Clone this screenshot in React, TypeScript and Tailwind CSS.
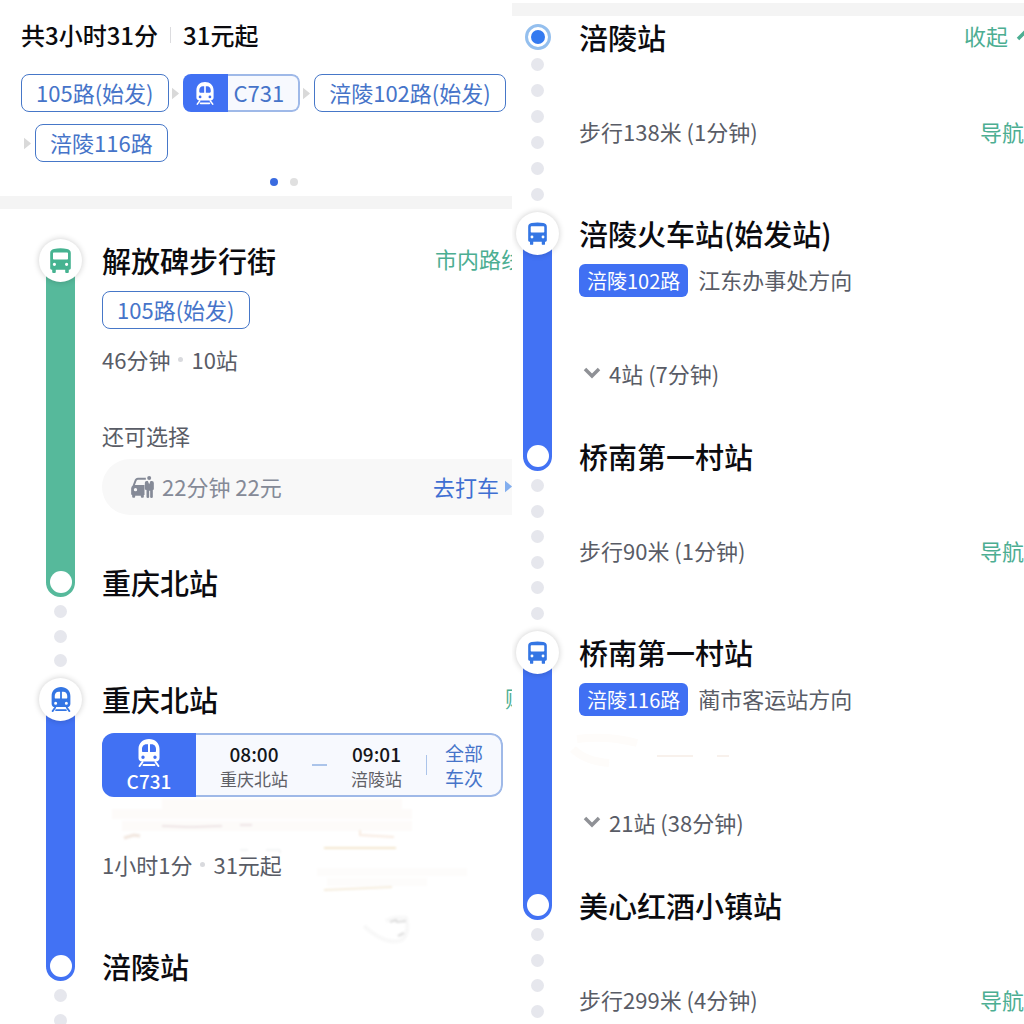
import React from "react";
import clsx from "clsx";

type IconProps = { className?: string };
type Tone = "green" | "blue";

const BusIcon = ({ className }: IconProps) => (
  <svg viewBox="0 0 21 25" className={className} fill="currentColor" aria-hidden="true">
    <path
      fillRule="evenodd"
      d="M4 .9C8 0 13 0 17 .9 19.500 1.400 20.800 2.800 20.800 5v15c0 1-.6 1.700-1.600 1.700h-.4V24a1 1 0 0 1-1 1h-1.600a1 1 0 0 1-1-1v-2.300H5.800V24a1 1 0 0 1-1 1H3.200a1 1 0 0 1-1-1v-2.300h-.4C.8 21.700.2 21 .2 20V5C.2 2.800 1.500 1.400 4 .9ZM3.800 4.500a.8.8 0 0 0-.8.8v5.400c0 .5.300.8.8.8h13.400a.8.8 0 0 0 .8-.8V5.300a.8.8 0 0 0-.8-.8H3.800ZM4.400 14.700a1.600 1.600 0 1 0 0 3.200 1.600 1.600 0 0 0 0-3.200Zm12.200 0a1.600 1.600 0 1 0 0 3.200 1.600 1.600 0 0 0 0-3.200Z"
    />
  </svg>
);

const TrainIcon = ({ className }: IconProps) => (
  <svg viewBox="0 0 22 28" className={className} fill="currentColor" aria-hidden="true">
    <path
      fillRule="evenodd"
      d="M11 0c6 0 10.500 4 10.500 10v9c0 2-1.500 3.500-3.500 3.500H4C2 22.500.5 21 .5 19v-9C.5 4 5 0 11 0Zm-1 5.200H8.500C5.500 5.200 4 7.500 4 10v2c0 .6.400 1 1 1h5V5.200Zm2 0V13h5c.6 0 1-.4 1-1v-2c0-2.500-1.500-4.800-4.500-4.800H12ZM5 16.500a1.700 1.700 0 1 0 0 3.400 1.700 1.700 0 0 0 0-3.400Zm12 0a1.700 1.700 0 1 0 0 3.400 1.700 1.700 0 0 0 0-3.400Z"
    />
    <path d="M4.500 23 1.600 27M17.500 23l2.900 4M5.500 26h11" fill="none" stroke="currentColor" strokeWidth="2" strokeLinecap="round" />
  </svg>
);

const TaxiIcon = ({ className }: IconProps) => (
  <svg viewBox="0 0 68 66" className={className} fill="currentColor" aria-hidden="true">
    <path d="M7 30 14 12q2-4 6-4h24" fill="none" stroke="currentColor" strokeWidth="6" />
    <path
      fillRule="evenodd"
      d="M7 27h33v30h-2v5q0 3-3 3h-3q-3 0-3-3v-3H12v3q0 3-3 3H6q-3 0-3-3v-4Q0 57 0 54V37q0-6 7-10Zm6 9a5 5 0 1 0 0 10 5 5 0 0 0 0-10Z"
    />
    <circle cx="54" cy="6" r="6" />
    <path d="M46 15h4l4 10 4-10h4q6 0 6 6v17q0 4-3 4v21q0 3-4 3t-4-3V44h-3v19q0 3-4 3t-4-3V42q-5 0-5-4V21q0-6 5-6Z" />
  </svg>
);

const Triangle = ({ className }: IconProps) => (
  <svg viewBox="0 0 7 13" className={clsx("h-[13px] w-[7px] shrink-0", className)} fill="currentColor" aria-hidden="true">
    <path d="M0 .8 6.500 6a.6.6 0 0 1 0 1L0 12.200Z" />
  </svg>
);

const Chevron = ({ className }: IconProps) => (
  <svg viewBox="0 0 18 12" className={className} fill="none" stroke="currentColor" strokeWidth="3.500" aria-hidden="true">
    <path d="m2 2 7 7 7-7" />
  </svg>
);

const RouteChip = ({ children }: { children: React.ReactNode }) => (
  <span className="flex h-[38px] w-fit items-center rounded-lg border border-[#4677c8] bg-white px-3.5 pb-0.5 text-[22px] whitespace-nowrap text-[#4674c9]">
    {children}
  </span>
);

const Dots = ({ count }: { count: number }) => (
  <div className="flex flex-1 flex-col items-center justify-between pt-2 pb-[11px]">
    {Array.from({ length: count }, (_, i) => (
      <span key={i} className="h-[13px] w-[13px] rounded-full bg-[#e6e7ed]" />
    ))}
  </div>
);

const StationName = ({ children }: { children: React.ReactNode }) => (
  <h2 className="pb-0.5 text-[29px] leading-[42px] font-medium whitespace-nowrap text-[#0b0b0f]">{children}</h2>
);

const GreenLink = ({ children }: { children: React.ReactNode }) => (
  <a href="#" className="shrink-0 text-[22px] leading-6 whitespace-nowrap text-[#4cae92]">
    {children}
  </a>
);

interface LegProps {
  tone: Tone;
  icon: React.ReactNode;
  children: React.ReactNode;
  end: string;
  endGap: string;
}

// One ride: badge, coloured bar and the terminal stop
const Leg = ({ tone, icon, children, end, endGap }: LegProps) => (
  <li className="flex gap-5">
    <div className="flex w-[43px] shrink-0 flex-col items-center">
      <div
        className={clsx(
          "z-10 flex h-[43px] w-[43px] items-center justify-center rounded-full bg-white shadow-[0_0_6px_rgba(0,0,0,0.2)]",
          tone === "green" ? "text-[#46b391]" : "text-[#3476e4]"
        )}
      >
        {icon}
      </div>
      <div
        className={clsx(
          "-mt-5 flex w-[29px] flex-1 items-end justify-center rounded-b-full pb-1",
          tone === "green" ? "bg-[#56b99b]" : "bg-[#4272f4]"
        )}
      >
        <span className="h-[22px] w-[22px] rounded-full bg-white" />
      </div>
    </div>
    <div className="relative min-w-0 flex-1">
      {children}
      <h2 className={clsx("pb-0.5 text-[29px] leading-[26px] font-medium whitespace-nowrap text-[#0b0b0f]", endGap)}>
        {end}
      </h2>
    </div>
  </li>
);

const Walk = ({ text }: { text: string }) => (
  <li className="flex gap-5">
    <div className="flex w-[43px] shrink-0 flex-col">
      <Dots count={6} />
    </div>
    <div className="flex flex-1 justify-between pt-[67px] pb-[69px] text-[22px] leading-6 text-[#595c66]">
      <span>{text}</span>
      <GreenLink>导航</GreenLink>
    </div>
  </li>
);

const Transfer = () => (
  <li className="flex h-[81px] w-[43px] flex-col">
    <Dots count={3} />
  </li>
);

const Meta = ({ items, className }: { items: string[]; className: string }) => (
  <p className={clsx("flex items-center gap-2 text-[22px] leading-6 text-[#595c66]", className)}>
    <span>{items[0]}</span>
    <span className="h-[5px] w-[5px] rounded-full bg-[#d9dade]" />
    <span>{items[1]}</span>
  </p>
);

const BusDirection = ({ line, direction }: { line: string; direction: string }) => (
  <div className="mt-2 flex h-[33px] items-center gap-2.5">
    <span className="flex h-full items-center rounded-md bg-[#4070f3] px-2 text-[20px] whitespace-nowrap text-white">{line}</span>
    <span className="pb-0.5 text-[22px] whitespace-nowrap text-[#595c66]">{direction}</span>
  </div>
);

const StopsToggle = ({ label, className }: { label: string; className: string }) => (
  <button type="button" className={clsx("flex items-center gap-2 pl-1 text-[22px] leading-6 text-[#595c66]", className)}>
    <Chevron className="h-3 w-[18px] text-[#8f9196]" />
    {label}
  </button>
);

const TrainCard = () => (
  <div className="mt-[11px] flex h-16 w-fit overflow-hidden rounded-xl bg-[#f7f9fe] whitespace-nowrap">
    <div className="flex w-[94px] flex-col items-center justify-center bg-[#4171f3] pt-1 text-white">
      <TrainIcon className="h-7 w-[22px]" />
      <span className="text-[19px] leading-7 font-medium">C731</span>
    </div>
    <div className="flex items-center rounded-r-xl border-2 border-l-0 border-[#9fb9e8] pl-6 text-center">
      <div className="pt-0.5">
        <p className="text-[19px] leading-[25px] font-medium text-[#15161a]">08:00</p>
        <p className="text-[17px] leading-[25px] text-[#5f6066]">重庆北站</p>
      </div>
      <span className="mx-6 h-0.5 w-[15px] bg-[#abc4ea]" />
      <div className="pt-0.5">
        <p className="text-[19px] leading-[25px] font-medium text-[#15161a]">09:01</p>
        <p className="text-[17px] leading-[25px] text-[#5f6066]">涪陵站</p>
      </div>
      <span className="ml-6 h-5 w-px bg-[#abc4ea]" />
      <button type="button" className="px-[18px] text-[19px] leading-[25px] text-[#4674c9]">
        全部
        <br />
        车次
      </button>
    </div>
  </div>
);

// Faint stains on the paper below the train card
const Stains = () => (
  <svg viewBox="0 0 400 150" className="pointer-events-none absolute top-[118px] left-0 h-[150px] w-[400px]" fill="none" aria-hidden="true">
    <defs>
      <filter id="soft" x="-10%" y="-50%" width="120%" height="200%">
        <feGaussianBlur stdDeviation="1" />
      </filter>
    </defs>
    <g filter="url(#soft)">
      <path d="M10 18h300M60 8h240M20 30h290" stroke="#fdfbf9" strokeWidth="10" />
      <path d="M60 30l28 1 32-1M138 29h12" stroke="#e8dcde" strokeWidth="1.500" />
      <path d="m22 42 10-3 6 1" stroke="#f1e6de" strokeWidth="3" />
      <path d="M222 52h72" stroke="#f3e6cd" strokeWidth="2" />
      <path d="m222 94 68-3" stroke="#f5ecdc" strokeWidth="2" />
      <path d="M258 34v5l34 2" stroke="#f8ebe1" strokeWidth="2" />
      <path d="M138 54h8M164 54h14v3" stroke="#e9ebec" strokeWidth="1" />
      <path d="M225 86h100M215 76h150" stroke="#fdfcfb" strokeWidth="8" />
      <path d="M262 130q22 20 38 14 8-8 4-22-12-2-20 3" stroke="#f8f8f8" strokeWidth="4" />
      <path d="m288 126 6-2 1 2 9-1M296 140l6-3" stroke="#dcdcdc" strokeWidth="2" />
    </g>
  </svg>
);

const FaintStain = () => (
  <svg viewBox="0 0 200 40" className="pointer-events-none absolute top-[96px] -left-3 h-10 w-[200px]" fill="none" aria-hidden="true">
    <path d="M10 12q30-4 60 4M6 22q12 12 36 14" stroke="#fefcfa" strokeWidth="8" />
    <path d="M90 29h36M150 29h12" stroke="#f8f1ec" strokeWidth="2" />
  </svg>
);

const Summary = () => (
  <header className="px-[21px] pt-[18px] pb-2.5">
    <h1 className="flex items-center gap-3 pb-0.5 text-[24px] leading-[34px] font-medium text-[#0b0b0f]">
      共3小时31分
      <span className="h-4 w-px bg-[#dcdcdf]" />
      31元起
    </h1>
    <ul className="mt-5 flex flex-wrap gap-y-3 text-[#d9d9d9]">
      <li>
        <RouteChip>105路(始发)</RouteChip>
      </li>
      <li className="flex items-center">
        <Triangle className="mr-1 ml-[3px]" />
        <span className="flex h-[38px] overflow-hidden rounded-lg bg-[#f7f9fe]">
          <span className="flex w-[45px] items-center justify-center bg-[#4171f3] text-white">
            <TrainIcon className="h-[23px] w-[18px]" />
          </span>
          <span className="flex items-center rounded-r-lg border-2 border-l-0 border-[#9fb9e8] pr-3.5 pb-0.5 pl-1.5 text-[22px] text-[#4674c9]">
            C731
          </span>
        </span>
      </li>
      <li className="flex items-center">
        <Triangle className="mr-1 ml-[3px]" />
        <RouteChip>涪陵102路(始发)</RouteChip>
      </li>
      <li className="flex items-center">
        <Triangle className="mr-1 ml-[3px]" />
        <RouteChip>涪陵116路</RouteChip>
      </li>
    </ul>
    <div className="mt-4 flex justify-center gap-3">
      <span className="h-2 w-2 rounded-full bg-[#3a6be0]" />
      <span className="h-2 w-2 rounded-full bg-[#e0e0e0]" />
    </div>
  </header>
);

export default function App() {
  return (
    <main className="grid h-screen grid-cols-2 overflow-hidden bg-white font-['Noto_Sans_CJK_SC',sans-serif]">
      <section className="min-w-0 overflow-hidden">
        {/* the sheet is wider than its pane and runs under the right edge */}
        <div className="-mr-[55px]">
          <Summary />
          <div className="h-[13px] bg-[#f4f4f4]" />
          <ol className="pt-[30px] pr-[18px] pl-[39px]">
            <Leg tone="green" icon={<BusIcon className="h-[25px] w-[21px]" />} end="重庆北站" endGap="mt-[54px]">
              <div className="flex items-center justify-between">
                <StationName>解放碑步行街</StationName>
                <span className="flex items-center gap-2 pb-1.5 text-[#4cae92]">
                  <GreenLink>市内路线</GreenLink>
                  <Chevron className="h-3 w-[18px] -rotate-90" />
                </span>
              </div>
              <div className="mt-2">
                <RouteChip>105路(始发)</RouteChip>
              </div>
              <Meta items={["46分钟", "10站"]} className="mt-[18px]" />
              <p className="mt-[52px] text-[22px] leading-6 text-[#595c66]">还可选择</p>
              <div className="mt-3 flex h-14 items-center rounded-full bg-[#f8f8f8] pr-[37px] pl-[29px] text-[22px]">
                <TaxiIcon className="h-[22px] w-[23px] text-[#858a97]" />
                <span className="ml-2 pb-0.5 text-[#858a97]">22分钟 22元</span>
                <button type="button" className="ml-auto flex items-center gap-1.5 pb-0.5 text-[#3f6fd2]">
                  去打车
                  <Triangle className="text-[#82aeee]" />
                </button>
              </div>
            </Leg>
            <Transfer />
            <Leg tone="blue" icon={<TrainIcon className="h-[25px] w-5" />} end="涪陵站" endGap="mt-[77px]">
              <div className="flex items-center justify-between">
                <StationName>重庆北站</StationName>
                <span className="flex pb-1.5">
                  <GreenLink>购票</GreenLink>
                </span>
              </div>
              <TrainCard />
              <Stains />
              <Meta items={["1小时1分", "31元起"]} className="mt-[55px]" />
            </Leg>
            <Transfer />
          </ol>
        </div>
      </section>

      <section className="min-w-0 overflow-hidden">
        <div className="mt-[3px] h-[13px] bg-[#f4f4f4]" />
        <ol className="pl-1">
          <li className="flex gap-5">
            <div className="flex w-[43px] shrink-0 flex-col items-center pt-2">
              <span className="flex h-[26px] w-[26px] items-center justify-center rounded-full border-[3px] border-[#94bfee]">
                <span className="h-3.5 w-3.5 rounded-full bg-[#347af0]" />
              </span>
              <Dots count={6} />
            </div>
            <div className="flex-1 pb-[69px]">
              <div className="flex items-center justify-between">
                <StationName>涪陵站</StationName>
                <button type="button" className="-mr-2.5 flex items-center gap-2 pb-1.5 text-[22px] leading-6 text-[#4cae92]">
                  收起
                  <Chevron className="h-3 w-[18px] rotate-180" />
                </button>
              </div>
              <div className="mt-[59px] flex justify-between text-[22px] leading-6 text-[#595c66]">
                <span>步行138米 (1分钟)</span>
                <GreenLink>导航</GreenLink>
              </div>
            </div>
          </li>
          <Leg tone="blue" icon={<BusIcon className="h-[23px] w-[19px]" />} end="桥南第一村站" endGap="mt-[58px]">
            <StationName>涪陵火车站(始发站)</StationName>
            <BusDirection line="涪陵102路" direction="江东办事处方向" />
            <StopsToggle label="4站 (7分钟)" className="mt-16" />
          </Leg>
          <Walk text="步行90米 (1分钟)" />
          <Leg tone="blue" icon={<BusIcon className="h-[23px] w-[19px]" />} end="美心红酒小镇站" endGap="mt-[58px]">
            <StationName>桥南第一村站</StationName>
            <BusDirection line="涪陵116路" direction="蔺市客运站方向" />
            <FaintStain />
            <StopsToggle label="21站 (38分钟)" className="mt-[94px]" />
          </Leg>
          <Walk text="步行299米 (4分钟)" />
        </ol>
      </section>
    </main>
  );
}
